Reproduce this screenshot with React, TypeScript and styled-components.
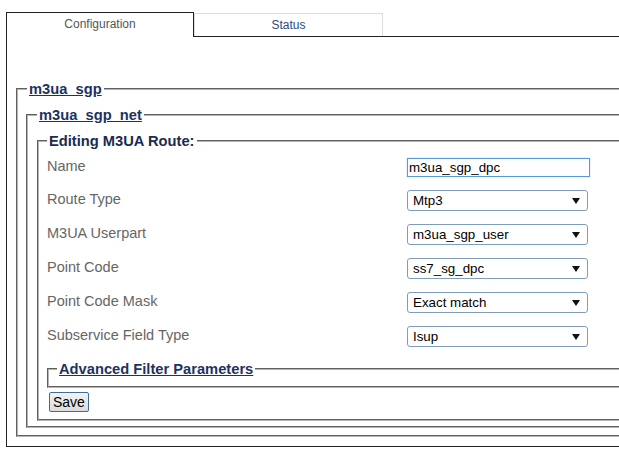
import React from 'react';
import styled, { createGlobalStyle } from 'styled-components';

const GlobalStyle = createGlobalStyle`
    html, body {
        margin: 0;
        padding: 0;
        overflow: hidden;
        background: #fff;
    }

    body {
        font-family: "Liberation Sans", Arial, sans-serif;
    }
`;

const Page = styled.div`
    width: 720px;
    padding: 12px 0 0 6px;
`;

const TabBar = styled.div`
    display: flex;
    align-items: flex-end;
    position: relative;
    z-index: 1;
`;

const Tab = styled.div<{ $active?: boolean }>`
    box-sizing: border-box;
    height: ${p => (p.$active ? '25px' : '23px')};
    width: ${p => (p.$active ? '188px' : '189px')};
    margin-bottom: ${p => (p.$active ? '-1px' : '0')};
    border: 1px solid ${p => (p.$active ? '#222' : '#ddd')};
    border-bottom: none;
    background: #fff;
    text-align: center;
    font-size: 12px;
    line-height: 14px;
    padding-top: 4px;
    color: ${p => (p.$active ? '#555' : '#2b4c7e')};
`;

const Panel = styled.div`
    border: 1px solid #222;
    padding: 44px 0 9px 9px;
`;

const Group = styled.fieldset<{ $pl?: number; $pt?: number; $pb?: number }>`
    margin: 0;
    min-width: 0;
    border: 2px groove #b4b4b4;
    padding: ${p => p.$pt ?? 10}px 0 ${p => p.$pb ?? 5}px ${p => p.$pl ?? 8}px;
`;

const Legend = styled.legend<{ $link?: boolean; $ml?: number }>`
    padding: 0 2px;
    margin-left: ${p => p.$ml ?? 0}px;
    font-size: 14.7px;
    line-height: 16px;
    font-weight: bold;
    color: ${p => (p.$link ? '#1d3263' : '#1b2b4f')};
    text-decoration: ${p => (p.$link ? 'underline' : 'none')};
`;

const FormGrid = styled.div`
    display: grid;
    grid-template-columns: 360px 183px;
    grid-template-rows: 32px;
    grid-auto-rows: 34px;
    align-items: center;
`;

const Label = styled.div`
    font-size: 14.5px;
    line-height: 16px;
    color: #666;
    margin-top: -2px;
`;

const TextInput = styled.input`
    box-sizing: border-box;
    width: 183px;
    height: 19px;
    margin: 0;
    padding: 0 1px;
    font-family: "Liberation Sans", Arial, sans-serif;
    font-size: 13.33px;
    color: #000;
    border: 1px solid #5b9bd5;
    box-shadow: 0 0 1px #8ab8e6;
    outline: none;
`;

const SelectWrap = styled.div`
    position: relative;
    width: 181px;
    height: 21px;

    &::after {
        content: '';
        position: absolute;
        right: 8px;
        top: 8px;
        border-left: 4px solid transparent;
        border-right: 4px solid transparent;
        border-top: 6px solid #111;
        pointer-events: none;
    }
`;

const Select = styled.select`
    appearance: none;
    box-sizing: border-box;
    width: 100%;
    height: 100%;
    margin: 0;
    padding: 0 0 0 5px;
    background: #fff;
    border: 1px solid #7f9dbb;
    border-radius: 3px;
    font-family: "Liberation Sans", Arial, sans-serif;
    font-size: 13.33px;
    color: #000;
`;

const Advanced = styled(Group)`
    margin-top: 8px;
`;

const SaveButton = styled.button`
    margin: 4px 0 0 2px;
    height: 20px;
    padding: 0 3px;
    font-family: "Liberation Sans", Arial, sans-serif;
    font-size: 14px;
    line-height: 16px;
    color: #000;
    background: linear-gradient(#f2f2f2, #dcdcdc);
    border: 1px solid #3e6d96;
    border-radius: 2px;
`;

const fields = [
    { label: 'Route Type', value: 'Mtp3' },
    { label: 'M3UA Userpart', value: 'm3ua_sgp_user' },
    { label: 'Point Code', value: 'ss7_sg_dpc' },
    { label: 'Point Code Mask', value: 'Exact match' },
    { label: 'Subservice Field Type', value: 'Isup' },
];

const App = () => {
    return (
        <>
            <GlobalStyle />
            <Page>
                <TabBar>
                    <Tab $active>Configuration</Tab>
                    <Tab>Status</Tab>
                </TabBar>
                <Panel>
                    <Group $pb={7}>
                        <Legend $link $ml={1}>m3ua_sgp</Legend>
                        <Group $pl={9} $pb={5}>
                            <Legend $link>m3ua_sgp_net</Legend>
                            <Group $pt={2} $pb={7}>
                                <Legend>Editing M3UA Route:</Legend>
                                <FormGrid>
                                    <Label>Name</Label>
                                    <TextInput defaultValue="m3ua_sgp_dpc" />
                                    {fields.map(f => (
                                        <React.Fragment key={f.label}>
                                            <Label>{f.label}</Label>
                                            <SelectWrap>
                                                <Select defaultValue={f.value}>
                                                    <option>{f.value}</option>
                                                </Select>
                                            </SelectWrap>
                                        </React.Fragment>
                                    ))}
                                </FormGrid>
                                <Advanced $pt={0} $pb={9} $pl={8}>
                                    <Legend $link>Advanced Filter Parameters</Legend>
                                </Advanced>
                                <SaveButton>Save</SaveButton>
                            </Group>
                        </Group>
                    </Group>
                </Panel>
            </Page>
        </>
    );
};

export default App;
